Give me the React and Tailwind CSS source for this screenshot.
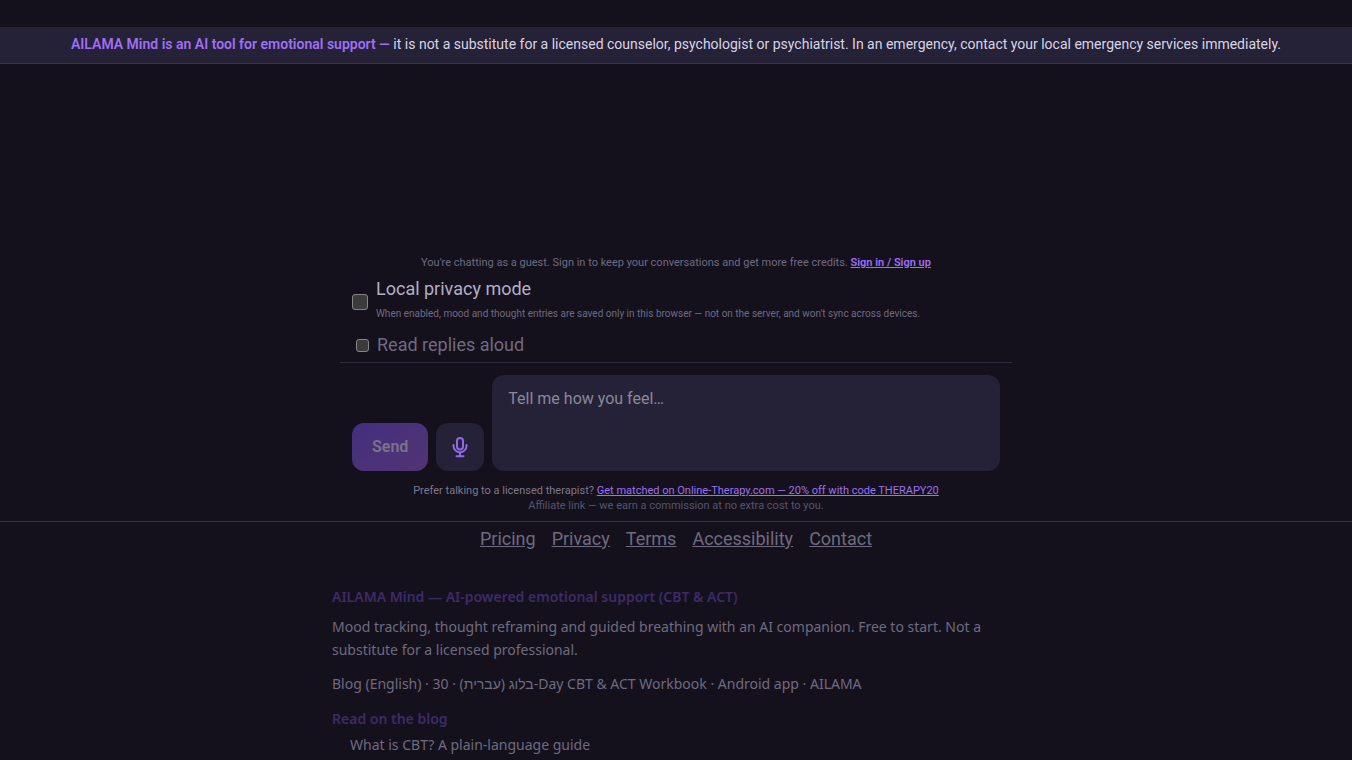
const footerLinks = ['Pricing', 'Privacy', 'Terms', 'Accessibility', 'Contact'];

const MicIcon = () => (
  <svg
    viewBox="0 0 24 24"
    className="size-6"
    fill="none"
    stroke="currentColor"
    strokeWidth="2"
    strokeLinecap="round"
    strokeLinejoin="round"
    aria-hidden="true"
  >
    <rect x="9" y="3" width="6" height="11.5" rx="3" />
    <path d="M5.5 10v.8a6.5 6.5 0 0 0 13 0V10" />
    <path d="M12 17.5v3.7" />
    <path d="M8.5 21.3h7" />
  </svg>
);

const DisclaimerBar = () => (
  <div className="mt-[27px] border-b border-[#38334b] bg-[#252136] px-4 pt-[7px] pb-[9px] text-center text-sm text-[#d8d4e8]">
    <strong className="font-semibold text-[#9f6ff5]">
      AILAMA Mind is an AI tool for emotional support —
    </strong>{' '}
    it is not a substitute for a licensed counselor, psychologist or psychiatrist. In an emergency,
    contact your local emergency services immediately.
  </div>
);

const ChatOptions = () => (
  <div className="border-b border-[#2f2b3e] px-3 pt-0.5 pb-[3px]">
    <div className="flex items-center gap-2">
      <input
        id="privacy"
        type="checkbox"
        className="size-4 shrink-0 appearance-none rounded-[3px] border border-[#858585] bg-[#3b3b3b]"
      />
      <label htmlFor="privacy" className="flex flex-col pb-2">
        <span className="text-lg leading-8 text-[#b3aec4]">Local privacy mode</span>
        <span className="text-[10px] leading-[18px] text-[#6f6a80]">
          When enabled, mood and thought entries are saved only in this browser — not on the server,
          and won't sync across devices.
        </span>
      </label>
    </div>
    <div className="flex items-center gap-2 pl-1">
      <input
        id="read-aloud"
        type="checkbox"
        className="size-[13px] shrink-0 appearance-none rounded-[3px] border border-[#858585] bg-[#3b3b3b]"
      />
      <label htmlFor="read-aloud" className="text-lg text-[#6f6a80]">
        Read replies aloud
      </label>
    </div>
  </div>
);

const Composer = () => (
  <form className="flex items-end gap-2 p-3" onSubmit={(e) => e.preventDefault()}>
    <button
      type="submit"
      disabled
      className="h-12 rounded-xl bg-linear-to-br from-[#432f7e] to-[#523374] px-5 text-base font-semibold text-[#7b7485]"
    >
      Send
    </button>
    <button
      type="button"
      aria-label="Record voice message"
      className="flex size-12 items-center justify-center rounded-xl bg-[#252136] text-[#9168e6]"
    >
      <MicIcon />
    </button>
    <textarea
      aria-label="Message"
      placeholder="Tell me how you feel…"
      className="h-24 flex-1 resize-none rounded-xl bg-[#252136] px-4 py-3 text-base text-[#d8d4e8] outline-none placeholder:text-[#8c8898]"
    />
  </form>
);

const SeoBlock = () => (
  <section className="mx-auto w-full max-w-[720px] px-4 pt-7 font-['Noto_Sans',sans-serif] text-sm leading-[23px] text-[#6f6a80]">
    <h1 className="font-semibold text-[#3e2a68]">
      AILAMA Mind — AI-powered emotional support (CBT &amp; ACT)
    </h1>
    <p className="mt-[7px]">
      Mood tracking, thought reframing and guided breathing with an AI companion. Free to start. Not
      a substitute for a licensed professional.
    </p>
    <p className="mt-[11px]">
      Blog (English) · בלוג (עברית) · 30-Day CBT &amp; ACT Workbook · Android app · AILAMA
    </p>
    <h2 className="mt-3 font-semibold text-[#3e2a68]">Read on the blog</h2>
    <ul className="mt-[3px] pl-[18px]">
      <li>
        <a href="#what-is-cbt">What is CBT? A plain-language guide</a>
      </li>
    </ul>
  </section>
);

export default function App() {
  return (
    <div className="flex min-h-screen flex-col bg-[#14111d] font-[Roboto,sans-serif]">
      <DisclaimerBar />
      <main className="mx-auto w-full max-w-2xl pt-[191px]">
        <p className="text-center text-[11px] leading-4 text-[#6f6a80]">
          You're chatting as a guest. Sign in to keep your conversations and get more free credits.{' '}
          <a href="#signin" className="font-semibold text-[#9f6ff5] underline">
            Sign in / Sign up
          </a>
        </p>
        <ChatOptions />
        <Composer />
        <p className="text-center text-[11px] leading-[15px] text-[#7c778c]">
          Prefer talking to a licensed therapist?{' '}
          <a href="#therapy" className="text-[#9f6ff5] underline">
            Get matched on Online-Therapy.com — 20% off with code THERAPY20
          </a>
        </p>
        <p className="pb-2 text-center text-[11px] leading-[15px] text-[#57536a]">
          Affiliate link — we earn a commission at no extra cost to you.
        </p>
      </main>
      <footer className="flex justify-center gap-4 border-t border-[#38334b] pt-[3px] pb-1 text-lg text-[#6f6a80]">
        {footerLinks.map((name) => (
          <a key={name} href={`#${name.toLowerCase()}`} className="underline">
            {name}
          </a>
        ))}
      </footer>
      <SeoBlock />
    </div>
  );
}
